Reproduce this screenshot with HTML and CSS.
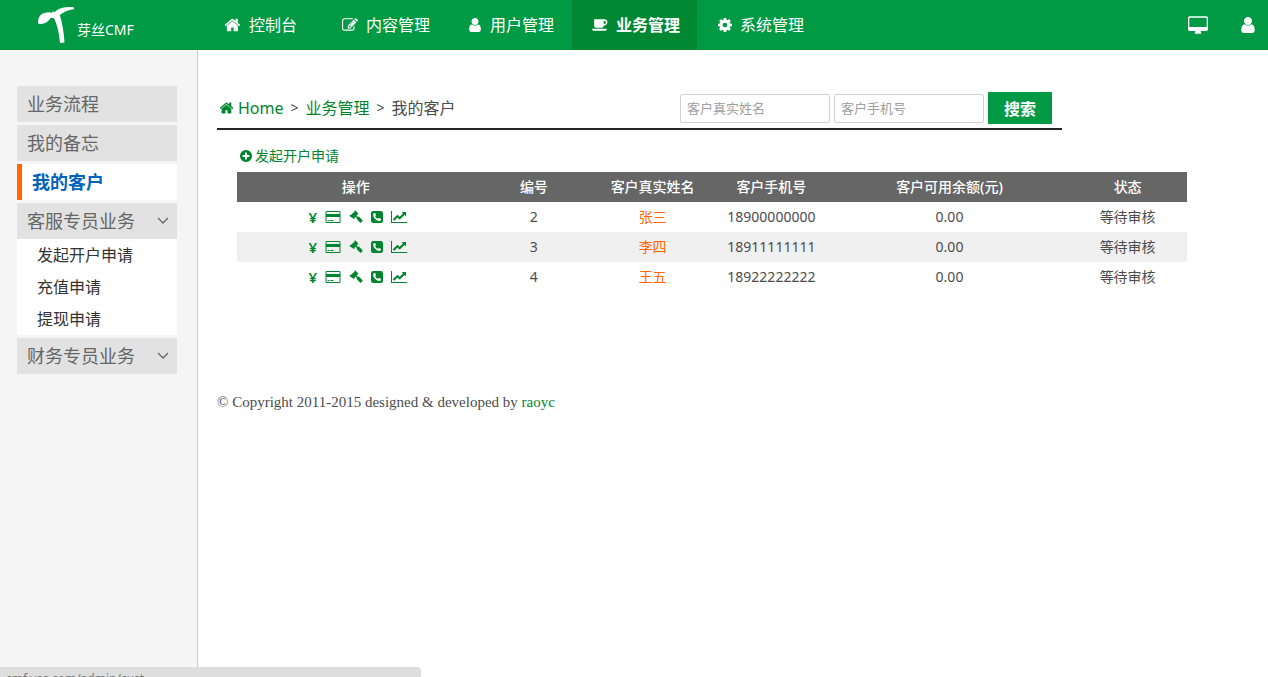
FILE: index.html
```html
<!DOCTYPE html>
<html lang="zh-CN">
<head>
<meta charset="utf-8">
<title>我的客户 - 芽丝CMF</title>
<link rel="stylesheet" href="styles.css">
</head>
<body>
<svg class="sprite" aria-hidden="true">
  <symbol id="home" viewBox="64 128 1664 1536"><path d="M1408 992v480q0 26-19 45t-45 19h-384v-384h-256v384h-384q-26 0-45-19t-19-45v-480q0-1 .5-3t.5-3l575-474 575 474q1 2 1 6zm223-69l-62 74q-8 9-21 11h-3q-13 0-21-7l-692-577-692 577q-12 8-24 7-13-2-21-11l-62-74q-8-10-7-23.5t11-21.5l719-599q32-26 76-26t76 26l244 204v-195q0-14 9-23t23-9h192q14 0 23 9t9 23v408l219 182q10 8 11 21.5t-7 23.5z"/></symbol>
  <symbol id="edit" viewBox="0 0 1792 1792"><path d="M888 1184l116-116-152-152-116 116v56h96v96h56zm440-720q-16-16-33 1l-350 350q-17 17-1 33t33-1l350-350q17-17 1-33zm80 594v190q0 119-84.5 203.5t-203.5 84.5h-832q-119 0-203.5-84.5t-84.5-203.5v-832q0-119 84.5-203.5t203.5-84.5h832q63 0 117 25 15 7 18 23 3 17-9 29l-49 49q-14 14-32 8-23-6-45-6h-832q-66 0-113 47t-47 113v832q0 66 47 113t113 47h832q66 0 113-47t47-113v-126q0-13 9-22l64-64q15-15 35-7t20 29zm-96-738l288 288-672 672h-288v-288zm444 132l-92 92-288-288 92-92q28-28 68-28t68 28l152 152q28 28 28 68t-28 68z"/></symbol>
  <symbol id="user" viewBox="256 128 1280 1536"><path d="M1536 1399q0 109-62.5 187t-150.5 78h-854q-88 0-150.5-78t-62.5-187q0-85 8.5-160.5t31.5-152 58.5-131 94-89 134.5-34.5q131 128 313 128t313-128q76 0 134.5 34.5t94 89 58.5 131 31.5 152 8.5 160.5zm-256-887q0 159-112.5 271.5t-271.5 112.5-271.5-112.5-112.5-271.5 112.5-271.5 271.5-112.5 271.5 112.5 112.5 271.5z"/></symbol>
  <symbol id="coffee" viewBox="0 128 1920 1664"><path d="M1664 640q0-80-56-136t-136-56h-64v384h64q80 0 136-56t56-136zm-1664 768h1792q0 106-75 181t-181 75h-1280q-106 0-181-75t-75-181zm1856-768q0 159-112.5 271.5t-271.5 112.5h-64v32q0 92-66 158t-158 66h-704q-92 0-158-66t-66-158v-736q0-26 19-45t45-19h1152q159 0 271.5 112.5t112.5 271.5z"/></symbol>
  <symbol id="cog" viewBox="128 128 1536 1536"><path d="M1152 896q0-106-75-181t-181-75-181 75-75 181 75 181 181 75 181-75 75-181zm512-109v222q0 12-8 23t-20 13l-185 28q-19 54-39 91 35 50 107 138 10 12 10 25t-9 23q-27 37-99 108t-94 71q-12 0-26-9l-138-108q-44 23-91 38-16 136-29 186-7 28-36 28h-222q-14 0-24.5-8.5t-11.5-21.5l-28-184q-49-16-90-37l-141 107q-10 9-25 9-14 0-25-11-126-114-165-168-7-10-7-23 0-12 8-23 15-21 51-66.5t54-70.5q-27-50-41-99l-183-27q-13-2-21-12.5t-8-23.5v-222q0-12 8-23t19-13l186-28q14-46 39-92-40-57-107-138-10-12-10-24 0-10 9-23 26-36 98.5-107.5t94.5-71.5q13 0 26 10l138 107q44-23 91-38 16-136 29-186 7-28 36-28h222q14 0 24.5 8.5t11.5 21.5l28 184q49 16 90 37l142-107q9-9 24-9 13 0 25 10 129 119 165 170 7 8 7 22 0 12-8 23-15 21-51 66.5t-54 70.5q26 50 41 98l183 28q13 2 21 12.5t8 23.5z"/></symbol>
  <symbol id="desktop" viewBox="0 0 1920 1664"><path d="M1792 992v-832q0-13-9.5-22.5t-22.5-9.5h-1600q-13 0-22.5 9.5t-9.5 22.5v832q0 13 9.5 22.5t22.5 9.5h1600q13 0 22.5-9.5t9.5-22.5zm128-832v1088q0 66-47 113t-113 47h-544q0 37 16 77.5t32 71 16 43.5q0 26-19 45t-45 19h-512q-26 0-45-19t-19-45q0-14 16-44t32-70 16-78h-544q-66 0-113-47t-47-113v-1088q0-66 47-113t113-47h1600q66 0 113 47t47 113z"/></symbol>
  <symbol id="plus" viewBox="128 128 1536 1536"><path d="M1344 960v-128q0-26-19-45t-45-19h-256v-256q0-26-19-45t-45-19h-128q-26 0-45 19t-19 45v256h-256q-26 0-45 19t-19 45v128q0 26 19 45t45 19h256v256q0 26 19 45t45 19h128q26 0 45-19t19-45v-256h256q26 0 45-19t19-45zm320-64q0 209-103 385.5t-279.5 279.5-385.5 103-385.5-103-279.5-279.5-103-385.5 103-385.5 279.5-279.5 385.5-103 385.5 103 279.5 279.5 103 385.5z"/></symbol>
  <symbol id="card" viewBox="0 128 1920 1536"><path d="M1760 128q66 0 113 47t47 113v1216q0 66-47 113t-113 47h-1600q-66 0-113-47t-47-113v-1216q0-66 47-113t113-47h1600zm-1600 128q-13 0-22.5 9.5t-9.5 22.5v224h1664v-224q0-13-9.5-22.5t-22.5-9.5h-1600zm1600 1280q13 0 22.5-9.5t9.5-22.5v-608h-1664v608q0 13 9.5 22.5t22.5 9.5h1600zm-1504-128v-128h256v128h-256zm384 0v-128h384v128h-384z"/></symbol>
  <symbol id="gavel" viewBox="0 0 14 14"><path d="M5.500.8q.7-.5 1.200 0l2.600 2.700q.3.700-.4 1.100l-.6-.1-.8 1L9 7l.9-.4 3.400 3.500q.5.500.1 1.100l-1.200 1.200q-.6.500-1.200 0L7.600 9l.2-.9-1.300-1.300-1 .9.100.7q-.5.700-1.100.4L.8 6.200q-.5-.6.100-1.200l.9-.1L5.400 1.700z"/></symbol>
  <symbol id="phone" viewBox="0 0 12 12"><path fill-rule="evenodd" d="M2.200 0h7.600Q12 0 12 2.200v7.600Q12 12 9.800 12H2.200Q0 12 0 9.800V2.200Q0 0 2.200 0zM3.300 2Q2 2.500 2 3.700q.2 2.500 2.200 4.300Q6.200 10 8.300 10q1.300-.1 1.700-1.300.1-.6 0-.8L8.100 6.800q-.3 0-.6.400-.4.600-.7.600Q4.800 6.900 4.200 5.200q0-.3.500-.7.400-.3.400-.6L4.100 2q-.2-.1-.8 0z"/></symbol>
  <symbol id="chart" viewBox="0 0 16 12"><path d="M0 0h1v11h15v1H0zM15 1v3.700q-.1.500-.5.200l-1-1L8.900 8.500q-.3.200-.5 0L6.500 6.600 3.300 9.800 1.800 8.300l4.400-4.400q.3-.2.500 0l1.900 1.900L12 2.400l-1-1q-.3-.4.200-.5h3.600z"/></symbol>
  <symbol id="chevron" viewBox="0 0 12 8"><path d="M1 1l5 5 5-5" fill="none" stroke="currentColor" stroke-width="1.300"/></symbol>
</svg>

<header class="topbar">
  <a class="brand" href="#">
    <svg class="brand-mark" viewBox="0 0 37 37" aria-hidden="true"><path d="M0 16Q-.2 8 6 6q5-1.200 8.500-.3l.3-1.700 1.700 1.200Q22-.6 34.500 0q2 .3 1.500 2.200-9 1-14.200 5.800Q25.500 20 26.500 35.400l-4.500.6Q20.600 20 16 11.200l-3.200-.4Q9.500 17 2.500 16.900.2 17 0 16z"/></svg>
    <span>芽丝CMF</span>
  </a>
  <nav class="mainnav">
    <a class="tab" href="#"><svg class="icon-16"><use href="#home"/></svg>控制台</a>
    <a class="tab" href="#"><svg class="icon-16"><use href="#edit"/></svg>内容管理</a>
    <a class="tab" href="#"><svg class="icon-14"><use href="#user"/></svg>用户管理</a>
    <a class="tab current" href="#"><svg class="icon-16"><use href="#coffee"/></svg>业务管理</a>
    <a class="tab" href="#"><svg class="icon-14"><use href="#cog"/></svg>系统管理</a>
  </nav>
  <div class="tools">
    <a href="#" aria-label="网站首页"><svg class="icon-20"><use href="#desktop"/></svg></a>
    <a href="#" aria-label="个人资料"><svg class="icon-16"><use href="#user"/></svg></a>
  </div>
</header>

<div class="layout">
  <aside class="sidebar">
    <a class="entry" href="#">业务流程</a>
    <a class="entry" href="#">我的备忘</a>
    <a class="entry selected" href="#">我的客户</a>
    <a class="entry" href="#">客服专员业务<svg class="chevron"><use href="#chevron"/></svg></a>
    <div class="submenu">
      <a href="#">发起开户申请</a>
      <a href="#">充值申请</a>
      <a href="#">提现申请</a>
    </div>
    <a class="entry" href="#">财务专员业务<svg class="chevron"><use href="#chevron"/></svg></a>
  </aside>

  <main class="content">
    <div class="heading">
      <nav class="crumbs">
        <a href="#"><svg class="icon-14"><use href="#home"/></svg>Home</a>
        <span class="sep">&gt;</span>
        <a href="#">业务管理</a>
        <span class="sep">&gt;</span>
        <span>我的客户</span>
      </nav>
      <form class="search">
        <input type="text" placeholder="客户真实姓名" aria-label="客户真实姓名">
        <input type="text" placeholder="客户手机号" aria-label="客户手机号">
        <button type="button">搜索</button>
      </form>
    </div>

    <section class="customers">
      <a class="create" href="#"><svg class="icon-12"><use href="#plus"/></svg>发起开户申请</a>
      <table>
        <thead>
          <tr><th class="wide">操作</th><th>编号</th><th>客户真实姓名</th><th>客户手机号</th><th class="wide">客户可用余额(元)</th><th>状态</th></tr>
        </thead>
        <tbody>
          <tr>
            <td><div class="actions"><a class="yen" href="#">¥</a><a href="#" aria-label="银行卡"><svg class="icon-16"><use href="#card"/></svg></a><a href="#" aria-label="审核"><svg class="icon-14"><use href="#gavel"/></svg></a><a href="#" aria-label="电话"><svg class="icon-12"><use href="#phone"/></svg></a><a href="#" aria-label="走势"><svg class="icon-16"><use href="#chart"/></svg></a></div></td>
            <td>2</td><td class="name">张三</td><td>18900000000</td><td>0.00</td><td>等待审核</td>
          </tr>
          <tr>
            <td><div class="actions"><a class="yen" href="#">¥</a><a href="#" aria-label="银行卡"><svg class="icon-16"><use href="#card"/></svg></a><a href="#" aria-label="审核"><svg class="icon-14"><use href="#gavel"/></svg></a><a href="#" aria-label="电话"><svg class="icon-12"><use href="#phone"/></svg></a><a href="#" aria-label="走势"><svg class="icon-16"><use href="#chart"/></svg></a></div></td>
            <td>3</td><td class="name">李四</td><td>18911111111</td><td>0.00</td><td>等待审核</td>
          </tr>
          <tr>
            <td><div class="actions"><a class="yen" href="#">¥</a><a href="#" aria-label="银行卡"><svg class="icon-16"><use href="#card"/></svg></a><a href="#" aria-label="审核"><svg class="icon-14"><use href="#gavel"/></svg></a><a href="#" aria-label="电话"><svg class="icon-12"><use href="#phone"/></svg></a><a href="#" aria-label="走势"><svg class="icon-16"><use href="#chart"/></svg></a></div></td>
            <td>4</td><td class="name">王五</td><td>18922222222</td><td>0.00</td><td>等待审核</td>
          </tr>
        </tbody>
      </table>
    </section>

    <footer class="copyright">© Copyright 2011-2015 designed &amp; developed by <a href="#">raoyc</a></footer>
  </main>
</div>

<div class="statusbar">cmf.yas.com/admin/cust</div>
</body>
</html>
```

FILE: styles.css
```css
* { box-sizing: border-box; }

body {
  margin: 0;
  min-height: 100vh;
  display: flex;
  flex-direction: column;
  background: #fff;
  color: #4c4c4c;
  font: 14px/20px "Noto Sans", "Noto Sans CJK SC", sans-serif;
}

a { color: #00852f; text-decoration: none; }
svg { fill: currentColor; flex: none; }
.sprite { position: absolute; width: 0; height: 0; }

.icon-12 { width: 12px; height: 12px; }
.icon-14 { width: 14px; height: 14px; }
.icon-16 { width: 16px; height: 16px; }
.icon-20 { width: 20px; height: 18px; }

/* Top bar */
.topbar {
  display: flex;
  height: 50px;
  background: #009a44;
  border-bottom: 1px solid #00913c;
}
.topbar a { color: #fff; }
.brand {
  display: flex;
  width: 197px;
  padding: 7px 0 0 38px;
  gap: 2px;
}
.brand-mark { width: 37px; height: 37px; }
.brand span { padding-top: 13px; }
.mainnav { display: flex; }
.tab {
  display: flex;
  align-items: center;
  justify-content: center;
  gap: 8px;
  width: 125px;
  height: 50px;
  padding-left: 3px;
  font-size: 16px;
}
.tab.current { background: #008732; font-weight: bold; }
.tools {
  display: flex;
  align-items: center;
  gap: 32px;
  margin-left: auto;
  padding-right: 12px;
}
.tools a { display: flex; }

/* Page body */
.layout { display: flex; flex: 1; }
.sidebar {
  display: flex;
  flex-direction: column;
  gap: 3px;
  width: 198px;
  padding: 36px 20px 0 17px;
  background: #f5f5f5;
  border-right: 1px solid #ccc;
}
.entry {
  display: flex;
  align-items: center;
  justify-content: space-between;
  height: 36px;
  padding: 0 8px 0 10px;
  background: #e2e2e2;
  color: #666;
  font-size: 18px;
}
.entry.selected {
  border-left: 5px solid #f60;
  background: #fff;
  color: #0063be;
  font-weight: bold;
}
.chevron { width: 12px; height: 8px; }
.submenu { margin-top: -3px; background: #fff; }
.submenu a {
  display: block;
  padding-left: 20px;
  color: #333;
  font-size: 16px;
  line-height: 32px;
}

.content { flex: 1; padding: 42px 81px 0 19px; }
.heading {
  display: flex;
  justify-content: space-between;
  max-width: 845px;
  padding: 0 10px 4px 3px;
  border-bottom: 2px solid #272324;
}
.crumbs { display: flex; align-items: center; gap: 7px; font-size: 16px; }
.crumbs a { display: flex; align-items: center; gap: 4px; }
.sep { font-size: 14px; }
.search { display: flex; align-items: center; gap: 4px; }
.search input {
  width: 150px;
  height: 29px;
  padding: 0 6px;
  border: 1px solid #d2d2d2;
  border-radius: 2px;
  font: 13px "Noto Sans", "Noto Sans CJK SC", sans-serif;
}
.search input::placeholder { color: #a0a0a0; }
.search button {
  width: 64px;
  height: 32px;
  padding: 0;
  border: 0;
  background: #009a44;
  color: #fff;
  font: bold 16px "Noto Sans", "Noto Sans CJK SC", sans-serif;
}

/* Customer table */
.customers { padding: 16px 0 0 20px; }
.create {
  display: flex;
  align-items: center;
  gap: 3px;
  padding: 0 0 6px 3px;
}
table { width: 100%; table-layout: fixed; border-collapse: collapse; }
th, td { height: 30px; padding: 0; text-align: center; }
th { width: 12.5%; background: #666; color: #fff; font-weight: 500; }
th.wide { width: 25%; }
tbody tr:nth-child(even) { background: #f0f0f0; }
.name { color: #f60; }
.actions {
  display: flex;
  align-items: center;
  justify-content: center;
  gap: 8px;
  padding-left: 4px;
}
.actions a { display: flex; }
.actions .icon-16 { height: 12px; }
.actions .yen { font-size: 15px; font-weight: 600; }

.copyright {
  padding-top: 100px;
  font: 15px/20px "Liberation Serif", serif;
}

/* Browser link preview */
.statusbar {
  position: fixed;
  left: 0;
  bottom: 0;
  width: 421px;
  height: 10px;
  padding: 4px 6px 0;
  overflow: hidden;
  border-radius: 0 4px 0 0;
  background: #dedede;
  color: #777;
  font-size: 12px;
  line-height: 16px;
}
```
